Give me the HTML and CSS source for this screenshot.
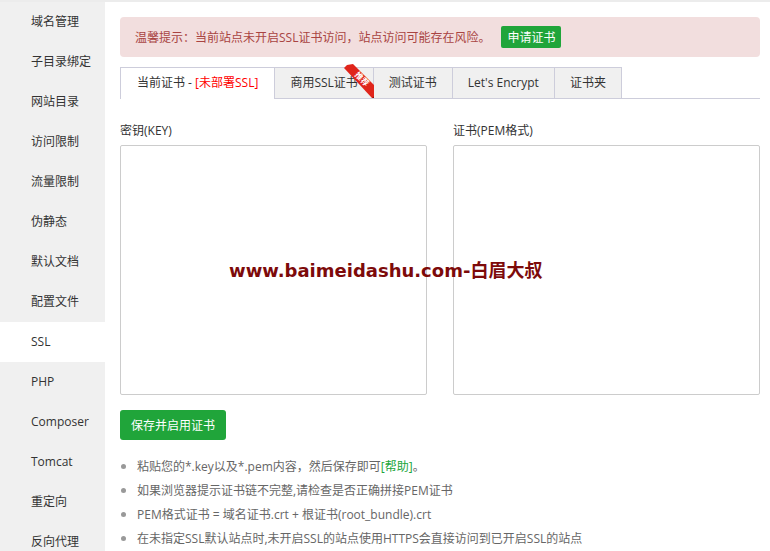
FILE: index.html
```html
<!DOCTYPE html>
<html lang="zh-CN">
<head>
    <meta charset="UTF-8">
    <title>网站设置 - SSL</title>
    <link rel="stylesheet" href="styles.css">
</head>
<body>
    <div class="page">
        <ul class="side-menu">
            <li>域名管理</li>
            <li>子目录绑定</li>
            <li>网站目录</li>
            <li>访问限制</li>
            <li>流量限制</li>
            <li>伪静态</li>
            <li>默认文档</li>
            <li>配置文件</li>
            <li class="active">SSL</li>
            <li>PHP</li>
            <li>Composer</li>
            <li>Tomcat</li>
            <li>重定向</li>
            <li>反向代理</li>
        </ul>

        <div class="main">
            <div class="alert">
                <span>温馨提示：当前站点未开启SSL证书访问，站点访问可能存在风险。</span>
                <button class="btn-apply">申请证书</button>
            </div>

            <div class="tabs">
                <div class="tab active">当前证书 - <span class="warn">[未部署SSL]</span></div>
                <div class="tab">商用SSL证书
                    <svg class="ribbon" width="34" height="36" viewBox="0 0 34 36">
                        <polygon points="1,4 4,1 10,0 33,23 33,34 29,34" fill="#e0251b"/>
                        <polygon points="29,34 33,34 33,31" fill="#8c0f0a"/>
                        <text x="17" y="17" transform="rotate(45 17 17)" text-anchor="middle" font-size="8" fill="#fff" font-family="Noto Sans CJK SC, sans-serif" font-weight="bold">推荐</text>
                    </svg>
                </div>
                <div class="tab">测试证书</div>
                <div class="tab">Let's Encrypt</div>
                <div class="tab">证书夹</div>
            </div>

            <div class="cert-form">
                <div class="field">
                    <label>密钥(KEY)</label>
                    <textarea></textarea>
                </div>
                <div class="field">
                    <label>证书(PEM格式)</label>
                    <textarea></textarea>
                </div>
            </div>

            <button class="btn-save">保存并启用证书</button>

            <ul class="tips">
                <li>粘贴您的*.key以及*.pem内容，然后保存即可<a class="help">[帮助]</a>。</li>
                <li>如果浏览器提示证书链不完整,请检查是否正确拼接PEM证书</li>
                <li>PEM格式证书 = 域名证书.crt + 根证书(root_bundle).crt</li>
                <li>在未指定SSL默认站点时,未开启SSL的站点使用HTTPS会直接访问到已开启SSL的站点</li>
            </ul>

            <div class="watermark">www.baimeidashu.com-白眉大叔</div>
        </div>
    </div>
</body>
</html>
```

FILE: styles.css
```css
body {
    margin: 0;
    font-family: "Open Sans", "Noto Sans CJK SC", sans-serif;
    font-size: 12px;
    color: #333;
    background: #fff;
}
.page {
    display: flex;
    border-top: 2px solid #ececec;
    height: 549px;
    overflow: hidden;
    position: relative;
}
.side-menu {
    list-style: none;
    margin: 0;
    padding: 0;
    width: 105px;
    flex-shrink: 0;
    background: #f0f0f0;
}
.side-menu li {
    height: 40px;
    line-height: 40px;
    padding-left: 31px;
    color: #333;
}
.side-menu li.active {
    background: #fff;
}
.main {
    flex: 1;
    padding: 15px 10px 0 15px;
}
.alert {
    display: flex;
    align-items: center;
    height: 40px;
    padding-left: 15px;
    background: #f2dede;
    color: #a94442;
    border-radius: 4px;
}
.btn-apply {
    margin-left: 11px;
    height: 22px;
    padding: 0 6px;
    border: none;
    border-radius: 2px;
    background: #20a53a;
    color: #fff;
    font: inherit;
}
.tabs {
    display: flex;
    margin-top: 10px;
    border-bottom: 1px solid #cdcddb;
}
.tab {
    position: relative;
    height: 30px;
    line-height: 30px;
    padding: 0 15px;
    background: #f0f0f0;
    border: 1px solid #cdcddb;
    border-left: none;
    border-bottom: none;
    margin-bottom: -1px;
}
.tab:first-child {
    border-left: 1px solid #cdcddb;
    padding: 0 16px;
}
.tab.active {
    background: #fff;
    height: 31px;
}
.warn {
    color: #f00;
}
.ribbon {
    position: absolute;
    right: -4px;
    top: -4px;
}
.cert-form {
    display: flex;
    gap: 26px;
    padding-top: 22px;
}
.field {
    flex: 1;
}
.field label {
    display: block;
    line-height: 20px;
    margin-bottom: 4px;
}
.field textarea {
    display: block;
    width: 100%;
    height: 250px;
    box-sizing: border-box;
    border: 1px solid #ccc;
    border-radius: 2px;
    resize: none;
}
.btn-save {
    display: block;
    margin-top: 15px;
    height: 30px;
    padding: 0 11px;
    border: none;
    border-radius: 3px;
    background: #20a53a;
    color: #fff;
    font: inherit;
}
.tips {
    list-style: none;
    margin: 15px 0 0;
    padding: 0;
    color: #666;
}
.tips li {
    line-height: 24px;
}
.tips li::before {
    content: "";
    display: inline-block;
    width: 5px;
    height: 5px;
    border-radius: 50%;
    background: #999;
    margin: 0 11px 2px 1px;
    vertical-align: middle;
}
.help {
    color: #20a53a;
}
.watermark {
    position: absolute;
    left: 229px;
    top: 254px;
    font-family: "DejaVu Sans", "Noto Sans CJK SC", sans-serif;
    font-weight: bold;
    font-size: 18px;
    color: #7d0a0a;
}
```
